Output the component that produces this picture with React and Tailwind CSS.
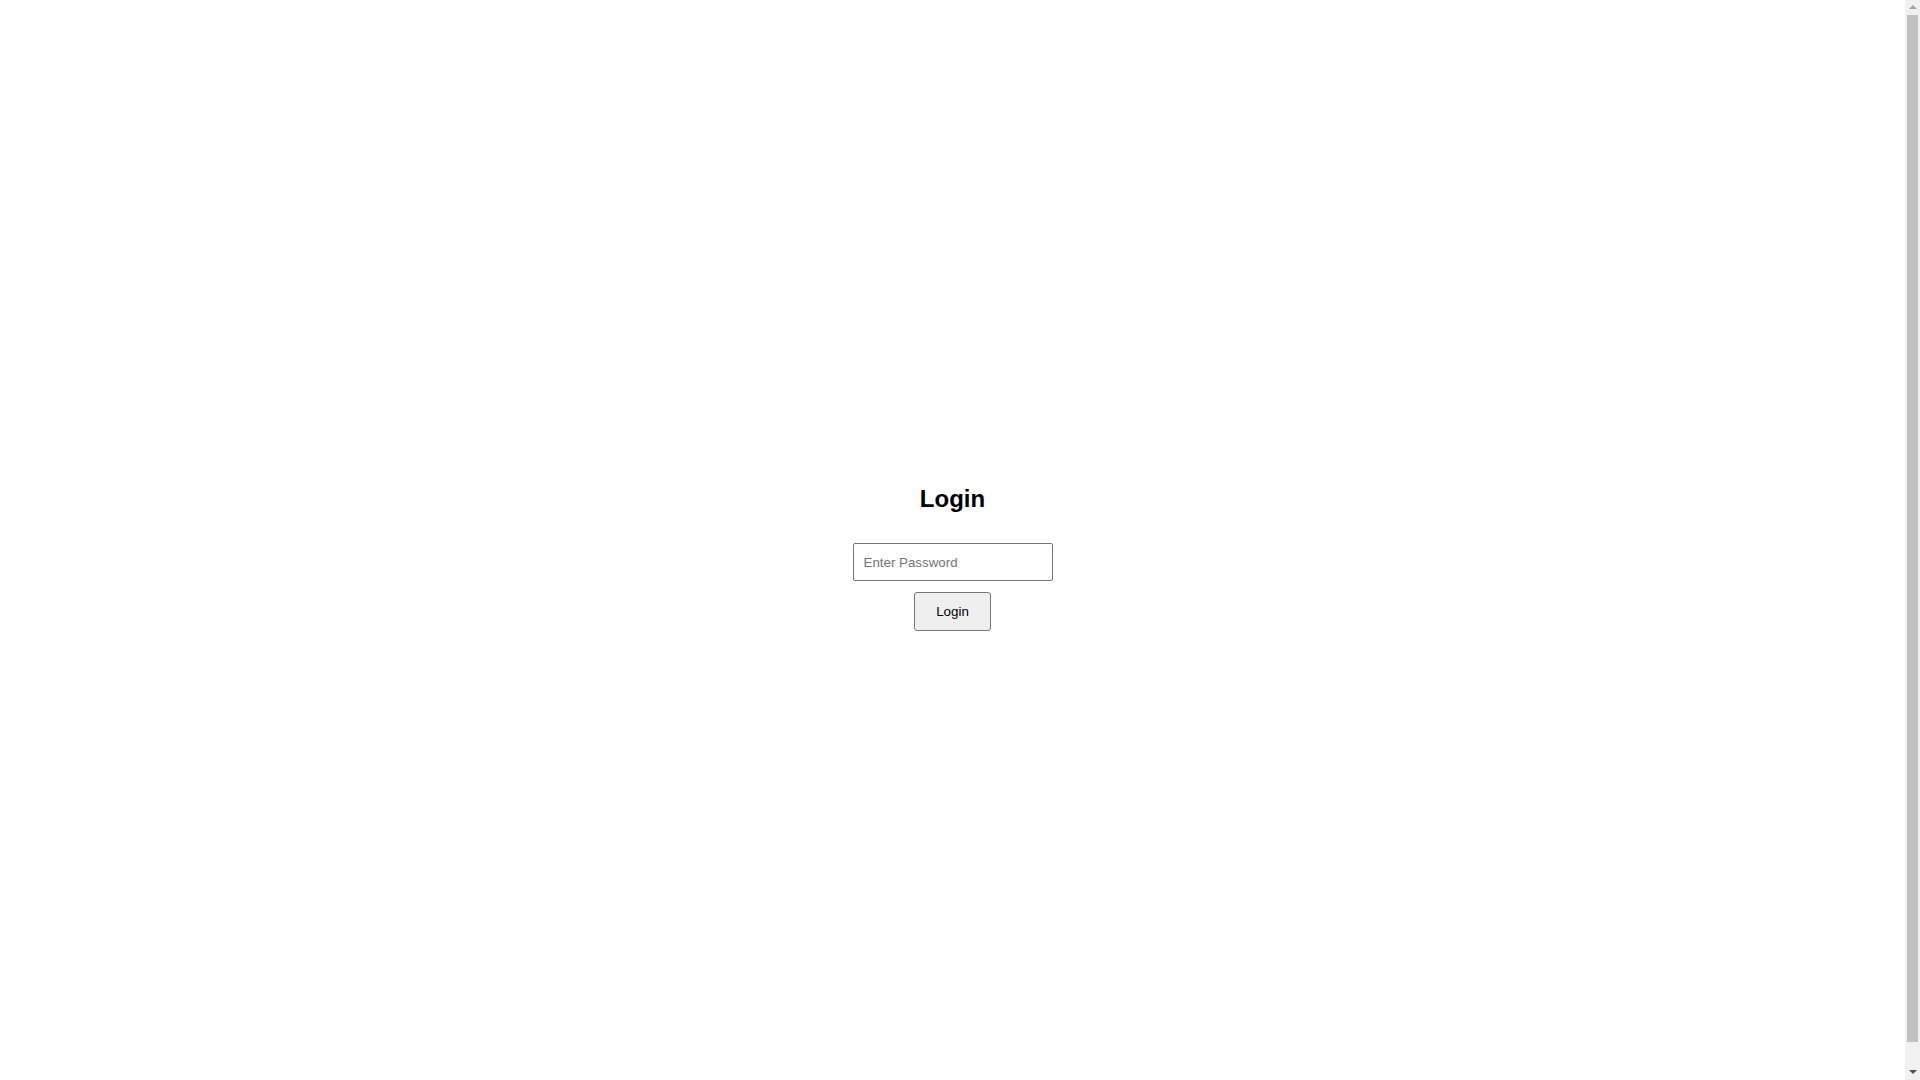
import React, { useState } from "react";

const Scrollbar = () => (
  <div className="flex h-screen w-[15px] shrink-0 flex-col bg-[#f1f1f1]">
    <div className="flex h-[15px] items-center justify-center">
      <svg width="8" height="5" viewBox="0 0 8 5">
        <polygon points="4,0 8,4 0,4" fill="#a3a3a3" />
      </svg>
    </div>
    <div className="flex flex-1 justify-center">
      <div className="mt-0 h-[1027px] w-[11px] bg-[#c1c1c1]" />
    </div>
    <div className="flex h-[15px] items-center justify-center">
      <svg width="8" height="5" viewBox="0 0 8 5">
        <polygon points="0,0 8,0 4,4" fill="#505050" />
      </svg>
    </div>
  </div>
);

const App = () => {
  const [password, setPassword] = useState("");

  return (
    <div className="flex h-screen overflow-hidden bg-white font-['Liberation_Sans',Arial,sans-serif] text-black">
      <div className="flex flex-1 flex-col items-center justify-center pt-[36px]">
        <h2 className="text-[24px] font-bold leading-[28px]">Login</h2>
        <form
          className="mt-[30px] flex flex-col items-center gap-[11px]"
          onSubmit={(e) => e.preventDefault()}
        >
          <input
            type="password"
            value={password}
            onChange={(e) => setPassword(e.target.value)}
            placeholder="Enter Password"
            className="h-[38px] w-[200px] rounded-[2px] border border-[#767676] bg-white px-[10px] text-[13.33px] text-black outline-none placeholder:text-[#757575]"
          />
          <button
            type="submit"
            className="h-[39px] w-[77px] rounded-[3px] border border-[#767676] bg-[#efefef] text-[13.33px] text-black"
          >
            Login
          </button>
        </form>
      </div>
      <Scrollbar />
    </div>
  );
};

export default App;
